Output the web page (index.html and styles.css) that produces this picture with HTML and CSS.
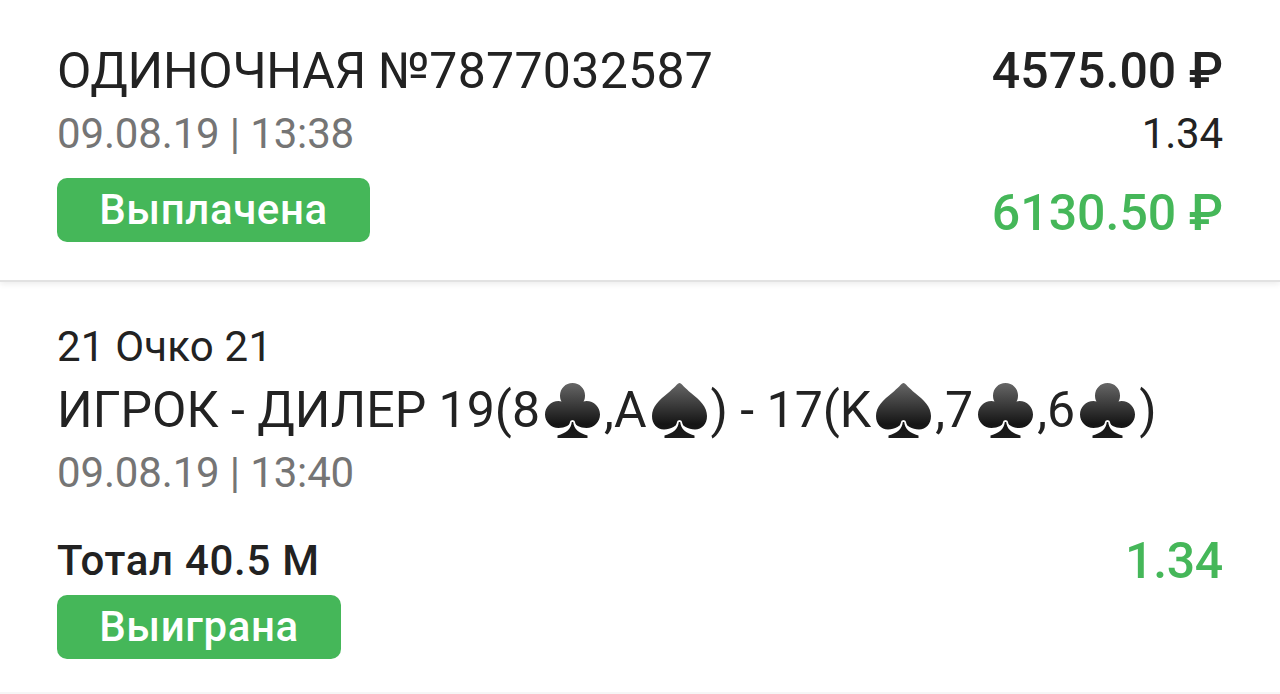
FILE: index.html
```html
<!DOCTYPE html>
<html lang="ru">
<head>
    <meta charset="utf-8">
    <title>История ставок</title>
    <meta name="viewport" content="width=device-width, initial-scale=1">
    <link rel="stylesheet" href="styles.css">
</head>
<body>
    <svg class="sprite" width="0" height="0">
        <defs>
            <linearGradient id="dark" gradientUnits="userSpaceOnUse" x1="0" y1="0" x2="0" y2="55">
                <stop offset="0" stop-color="#666"/>
                <stop offset="0.75" stop-color="#151515"/>
                <stop offset="1" stop-color="#1c1c1c"/>
            </linearGradient>
            <symbol id="stem" viewBox="0 0 55 55">
                <path fill="url(#dark)" stroke="#fff" stroke-width="3.4" stroke-linejoin="round" paint-order="stroke" d="M26.8 39C26 46 21.500 50 12.500 52.500V55H42.500V52.500C33.500 50 29 46 28.200 39z"/>
            </symbol>
            <symbol id="club" viewBox="0 0 55 55">
                <path fill="url(#dark)" d="M27.500 0C20.500 0 15 5.500 15 12.500C15 15 15.500 17 16.500 18.500C15.700 18.200 14.500 18 13.500 18C6 18 0 24 0 31.500C0 39 6 45 13.500 45C20 45 25.500 42 27.500 37C29.500 42 35 45 41.500 45C49 45 55 39 55 31.500C55 24 49 18 41.500 18C40.500 18 39.300 18.200 38.500 18.500C39.500 17 40 15 40 12.500C40 5.500 34.500 0 27.500 0z"/>
                <use href="#stem" width="55" height="55"/>
            </symbol>
            <symbol id="spade" viewBox="0 0 55 55">
                <path fill="url(#dark)" d="M27.500 0C29 0 33 5 39 10C48 17 55 24 55 33C55 41 50 46.500 43 46.500C36 46.500 30 43 27.500 37C25 43 19 46.500 12 46.500C5 46.500 0 41 0 33C0 24 7 17 16 10C22 5 26 0 27.500 0z"/>
                <use href="#stem" width="55" height="55"/>
            </symbol>
        </defs>
    </svg>
    <header class="ticket">
        <div class="info">
            <h1 class="number">ОДИНОЧНАЯ №<span class="id">7877032587</span></h1>
            <p class="date">09.08.19 | 13:38</p>
            <span class="badge paid">Выплачена</span>
        </div>
        <div class="sums">
            <p class="stake">4575.00 ₽</p>
            <p class="coef">1.34</p>
            <p class="payout">6130.50 ₽</p>
        </div>
    </header>
    <main class="event">
        <p class="league">21 Очко 21</p>
        <h2 class="game">ИГРОК - ДИЛЕР 19(8<svg class="suit"><use href="#club"/></svg>,A<svg class="suit"><use href="#spade"/></svg>) - 17(K<svg class="suit"><use href="#spade"/></svg>,7<svg class="suit"><use href="#club"/></svg>,6<svg class="suit"><use href="#club"/></svg>)</h2>
        <p class="date">09.08.19 | 13:40</p>
        <div class="outcome">
            <p class="bet">Тотал 40.5 М</p>
            <p class="win">1.34</p>
        </div>
        <span class="badge won">Выиграна</span>
    </main>
</body>
</html>
```

FILE: styles.css
```css
*{
    box-sizing: border-box;
}
body{
    margin: 0;
    height: 694px;
    overflow: hidden;
    background-color: #fff;
    color: #222;
    font-family: Roboto, sans-serif;
    border-bottom: 2px solid #f6f6f6;
}
h1, h2, p{
    margin: 0;
    font-weight: 400;
    white-space: nowrap;
}
.sprite{
    position: absolute;
}
.ticket{
    display: flex;
    justify-content: space-between;
    height: 282px;
    padding: 40px 57px 0;
    border-bottom: 2px solid #e2e2e2;
    box-shadow: 0 2px 6px rgba(0, 0, 0, 0.08);
}
.number, .game{
    font-size: 50px;
    line-height: 62px;
}
.number{
    letter-spacing: -0.3px;
}
.id{
    letter-spacing: 0.3px;
}
.date, .coef, .league{
    font-size: 42px;
    line-height: 64px;
}
.date, .coef{
    letter-spacing: -0.15px;
}
.league{
    line-height: 62px;
    letter-spacing: 0.2px;
}
.date{
    color: #757575;
}
.badge{
    display: block;
    height: 64px;
    border-radius: 10px;
    background-color: #45b759;
    color: #fff;
    font-size: 42px;
    font-weight: 500;
    line-height: 64px;
    letter-spacing: 0.6px;
    text-align: center;
}
.paid{
    width: 313px;
    margin-top: 12px;
}
.won{
    width: 284px;
}
.sums{
    text-align: right;
}
.stake, .payout, .win{
    font-size: 50px;
    font-weight: 500;
    line-height: 62px;
}
.payout, .win{
    color: #45b759;
}
.payout{
    margin-top: 16px;
}
.event{
    padding: 34px 57px 0;
}
.game{
    padding-top: 1px;
}
.suit{
    width: 55px;
    height: 55px;
    margin: 0 4px 0 5px;
    vertical-align: -11px;
}
.outcome{
    display: flex;
    justify-content: space-between;
    margin-top: 24px;
    padding-bottom: 2px;
}
.bet{
    font-size: 42px;
    font-weight: 500;
    line-height: 64px;
    letter-spacing: 0.7px;
}
.win{
    line-height: 64px;
    letter-spacing: -0.3px;
}
```
